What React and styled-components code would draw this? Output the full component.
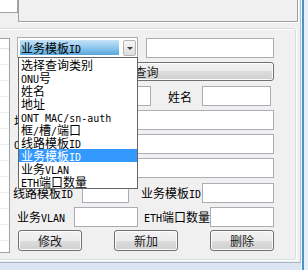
import React from "react"
import styled, { createGlobalStyle } from "styled-components"

const GlobalStyle = createGlobalStyle`
  * { box-sizing: border-box; }
  html, body { margin: 0; padding: 0; background: #dde8f4; }
  body {
    font-family: "Noto Sans CJK SC", "Noto Sans", sans-serif;
    font-size: 12px;
    color: #000;
  }
`

const items = [
  "选择查询类别",
  "ONU号",
  "姓名",
  "地址",
  "ONT MAC/sn-auth",
  "框/槽/端口",
  "线路模板ID",
  "业务模板ID",
  "业务VLAN",
  "ETH端口数量",
]

const gridRows = Array.from({ length: 13 })

// latin runs get the narrow mono face, like the half-width glyphs of the original
const Txt = ({ s }) =>
  s
    .split(/([\x20-\x7e]+)/)
    .filter(Boolean)
    .map((p, i) =>
      /^[\x20-\x7e]+$/.test(p) ? <Lat key={i}>{p}</Lat> : <span key={i}>{p}</span>
    )

const App = () => {
  return (
    <Frame>
      <GlobalStyle />
      <Client>
        <TopRow>
          <Corner />
          <TopPanel />
        </TopRow>

        <Group>
          <LeftGrid>
            <GridHead />
            {gridRows.map((_, i) => (
              <GridRow key={i} />
            ))}
          </LeftGrid>

          <Form>
            <Row $h={21} $align="flex-end">
              <Combo>
                <Sel>
                  <Txt s="业务模板ID" />
                </Sel>
                <Arrow>
                  <Tri />
                </Arrow>
                <List>
                  {items.map((t) => (
                    <Item key={t} $on={t === "业务模板ID"}>
                      <Txt s={t} />
                    </Item>
                  ))}
                </List>
              </Combo>
              <Input $ml={8} $w={128} readOnly />
            </Row>

            <Row $mt={4} $h={19}>
              <Btn $ml={6} $w={255} $h={19}>查询</Btn>
            </Row>

            <Row $mt={5}>
              <Label $ml={8} $w={30}>
                <Txt s="ONU号" />
              </Label>
              <Input $ml={4} $w={96} readOnly />
              <Label $ml={17} $w={24}>姓名</Label>
              <Input $ml={10} $w={69} readOnly />
            </Row>

            <Row $mt={4}>
              <Label $ml={1} $w={24}>地址</Label>
              <Input $ml={14} $w={222} readOnly />
            </Row>

            <Row $mt={4}>
              <Label $ml={1} $w={90}>
                <Txt s="ONT MAC/sn-auth" />
              </Label>
              <Input $ml={2} $w={168} readOnly />
            </Row>

            <Row $mt={4}>
              <Label $ml={7} $w={60}>
                <Txt s="框/槽/端口" />
              </Label>
              <Input $ml={2} $w={192} readOnly />
            </Row>

            <Row $mt={5}>
              <Label $ml={0} $w={60}>
                <Txt s="线路模板ID" />
              </Label>
              <Input $ml={9} $w={47} readOnly />
              <Label $ml={12} $w={60}>
                <Txt s="业务模板ID" />
              </Label>
              <Input $ml={1} $w={72} readOnly />
            </Row>

            <Row $mt={4}>
              <Label $ml={4} $w={48}>
                <Txt s="业务VLAN" />
              </Label>
              <Input $ml={9} $w={64} readOnly />
              <Label $ml={6} $w={66}>
                <Txt s="ETH端口数量" />
              </Label>
              <Input $ml={0} $w={64} readOnly />
            </Row>

            <Row $mt={3} $h={21}>
              <Btn $ml={5} $w={64} $h={21}>修改</Btn>
              <Btn $ml={32} $w={64} $h={21}>新加</Btn>
              <Btn $ml={32} $w={64} $h={21}>删除</Btn>
            </Row>
          </Form>
        </Group>
      </Client>
    </Frame>
  )
}

export default App

const Frame = styled.div`
  width: 308px;
  height: 270px;
  overflow: hidden;
  background: linear-gradient(
      to right,
      transparent 301px,
      #f4f8fc 301px,
      #f4f8fc 302px,
      #4b93c4 302px,
      #4b93c4 304px,
      #e6eef7 304px
    ),
    #dbe6f2;
`

const Client = styled.div`
  width: 301px;
  height: 263px;
  background: #f0f0f0;
  border-right: 1px solid #b4c0cc;
  border-bottom: 1px solid #a6b3c1;
  overflow: hidden;
  display: flex;
  flex-direction: column;
`

const TopRow = styled.div`
  display: flex;
  margin-top: -10px;
  height: 32px;
  flex: none;
`

const Corner = styled.div`
  width: 18px;
  height: 23px;
  background: #fff;
  border-right: 1px solid #a0a0a0;
  border-bottom: 1px solid #a0a0a0;
`

const TopPanel = styled.div`
  width: 280px;
  height: 32px;
  background: #f0f0f0;
  border: 1px solid #a0a0a0;
  box-shadow: 1px 1px 0 #fff;
`

const Group = styled.div`
  flex: none;
  margin: 6px 0 0 -6px;
  width: 302px;
  height: 232px;
  border: 1px solid #d5dfe5;
  border-radius: 3px;
  box-shadow: inset 1px 1px 0 #fff, 1px 1px 0 #fff;
  display: flex;
  align-items: flex-start;
`

const LeftGrid = styled.div`
  flex: none;
  margin-top: 9px;
  width: 15px;
  height: 215px;
  background: #fff;
  border: 1px solid #9ea3ab;
  overflow: hidden;
`

const GridHead = styled.div`
  height: 10px;
  border-bottom: 1px solid #e2e2e2;
`

const GridRow = styled.div`
  height: 16px;
  border-bottom: 1px solid #ececec;
`

const Form = styled.div`
  flex: none;
  margin: 8px 0 0 3px;
  width: 261px;
  display: flex;
  flex-direction: column;
`

const Row = styled.div`
  display: flex;
  align-items: ${(p) => p.$align || "center"};
  height: ${(p) => p.$h || 20}px;
  margin-top: ${(p) => p.$mt || 0}px;
`

const Lat = styled.span`
  font-family: "DejaVu Sans Mono", "Liberation Mono", monospace;
  font-size: 10px;
`

const Label = styled.span`
  flex: none;
  margin-left: ${(p) => p.$ml || 0}px;
  width: ${(p) => p.$w}px;
  white-space: nowrap;
  line-height: 13px;
`

const Input = styled.input`
  flex: none;
  margin: 0 0 0 ${(p) => p.$ml || 0}px;
  padding: 0;
  width: ${(p) => p.$w}px;
  height: 20px;
  background: #fff;
  border: 1px solid #abadb3;
  outline: none;
`

const Btn = styled.button`
  flex: none;
  margin-left: ${(p) => p.$ml || 0}px;
  width: ${(p) => p.$w}px;
  height: ${(p) => p.$h}px;
  padding: 0;
  border: 1px solid #707070;
  border-radius: 3px;
  background: linear-gradient(
    to bottom,
    #f2f2f2 0%,
    #ebebeb 50%,
    #dddddd 50%,
    #cfcfcf 100%
  );
  box-shadow: inset 0 0 0 1px #fcfcfc;
  font-family: "Noto Sans CJK SC", sans-serif;
  font-size: 12px;
  line-height: 1;
  color: #1a1a1a;
`

const Combo = styled.div`
  position: relative;
  flex: none;
  margin-left: 4px;
  width: 121px;
  height: 21px;
  padding: 2px 0 0 2px;
  background: #fff;
  border: 1px solid #abadb3;
  display: flex;
  align-items: flex-start;
`

const Sel = styled.div`
  width: 99px;
  height: 15px;
  padding-left: 1px;
  line-height: 15px;
  white-space: nowrap;
  background: linear-gradient(to bottom, #c6e3f8 0%, #8fc8ed 50%, #57a6db 100%);
`

const Arrow = styled.div`
  margin-left: 4px;
  width: 13px;
  height: 16px;
  border: 1px solid #b5b5b5;
  border-radius: 2px;
  background: linear-gradient(to bottom, #f6f6f6, #dedede);
  display: flex;
  align-items: center;
  justify-content: center;
`

const Tri = styled.div`
  width: 0;
  height: 0;
  border-left: 3px solid transparent;
  border-right: 3px solid transparent;
  border-top: 3px solid #404040;
`

const List = styled.div`
  position: absolute;
  z-index: 10;
  top: 19px;
  left: 0;
  width: 120px;
  border: 1px solid #646464;
  background: #fff;
`

const Item = styled.div`
  height: 13px;
  line-height: 13px;
  padding-left: 2px;
  white-space: nowrap;
  background: ${(p) => (p.$on ? "#3399ff" : "transparent")};
  color: ${(p) => (p.$on ? "#fff" : "#000")};
`
